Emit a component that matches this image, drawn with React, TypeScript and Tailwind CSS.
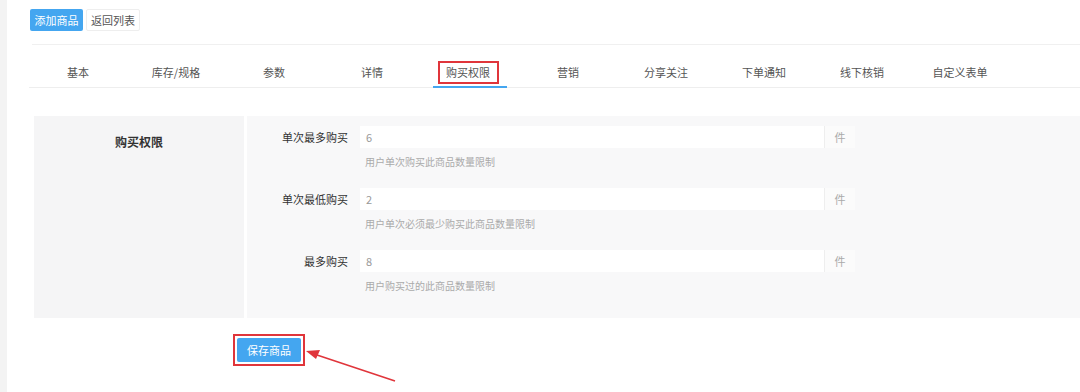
import React from 'react'

const tabs = ['基本', '库存/规格', '参数', '详情', '购买权限', '营销', '分享关注', '下单通知', '线下核销', '自定义表单']

const rows = [
  { label: '单次最多购买', value: '6', help: '用户单次购买此商品数量限制' },
  { label: '单次最低购买', value: '2', help: '用户单次必须最少购买此商品数量限制' },
  { label: '最多购买', value: '8', help: '用户购买过的此商品数量限制' },
]

const font = { fontFamily: '"Noto Sans CJK SC", "Noto Sans", sans-serif' }

export default function App() {
  return (
    <div className="relative flex h-[392px] w-[1080px] overflow-hidden bg-white text-[11px] text-[#555]" style={font}>
      {/* left gutter */}
      <div className="w-[7px] shrink-0 bg-[#f3f3f3]"></div>

      <div className="flex flex-1 flex-col pl-[23px]">
        {/* top buttons */}
        <div className="flex gap-[3px] pt-[9px]">
          <div className="flex h-[22px] w-[53px] items-center justify-center rounded-[2px] bg-[#44a6f0] text-white">
            添加商品
          </div>
          <div className="flex h-[22px] w-[54px] items-center justify-center rounded-[2px] border border-[#eeeeee] bg-white text-[#555]">
            返回列表
          </div>
        </div>
        <div className="ml-[2px] mt-[13px] h-px bg-[#f0f0f0]"></div>

        {/* tabs */}
        <div className="ml-[-1px] flex h-[43px] border-b border-[#eeeeee]">
          {tabs.map((t) => (
            <div key={t} className="relative flex w-[98px] justify-center pt-[20px]">
              {t === '购买权限' ? (
                <>
                  <span className="ml-[-4px] mt-[-4px] flex h-[23px] w-[61px] items-center justify-center border-2 border-[#e0353b] text-[#555]">
                    {t}
                  </span>
                  <span className="absolute bottom-[-1px] left-[12px] h-[2px] w-[74px] bg-[#44a6f0]"></span>
                </>
              ) : (
                <span className="leading-[14px]">{t}</span>
              )}
            </div>
          ))}
        </div>

        {/* form panel */}
        <div className="ml-[4px] mt-[28px] flex h-[202px] gap-[3px]">
          <div className="flex w-[210px] shrink-0 justify-center bg-[#f5f5f6] pt-[17px]">
            <span className="text-[12px] font-bold text-[#333]">购买权限</span>
          </div>
          <div className="flex flex-1 flex-col gap-[20px] bg-[#f8f8f9] pt-[10px]">
            {rows.map((r) => (
              <div key={r.label} className="flex">
                <div className="flex h-[22px] w-[101px] shrink-0 items-center justify-end text-[#333]">
                  {r.label}
                </div>
                <div className="ml-[12px] flex flex-col">
                  <div className="flex h-[22px]">
                    <div className="flex w-[464px] items-center bg-white pl-[6px] text-[#999]">{r.value}</div>
                    <div className="flex w-[31px] items-center justify-center border-l border-[#eeeeee] bg-[#fbfbfb] text-[#aaa]">
                      件
                    </div>
                  </div>
                  <div className="mt-[7px] pl-[5px] text-[10px] leading-[13px] text-[#aaa]">{r.help}</div>
                </div>
              </div>
            ))}
          </div>
        </div>

        {/* save */}
        <div className="ml-[203px] mt-[16px]">
          <div className="flex h-[32px] w-[72px] items-center justify-center border-2 border-[#e0353b]">
            <div className="flex h-[24px] w-[64px] items-center justify-center rounded-[2px] bg-[#44a6f0] text-white">
              保存商品
            </div>
          </div>
        </div>
      </div>

      {/* arrow annotation */}
      <svg className="absolute left-0 top-0" width="1080" height="392" viewBox="0 0 1080 392">
        <line x1="314" y1="354" x2="395" y2="381" stroke="#e0353b" strokeWidth="1.5" />
        <polygon points="306,351 320,350 316,359" fill="#e0353b" />
      </svg>
    </div>
  )
}
